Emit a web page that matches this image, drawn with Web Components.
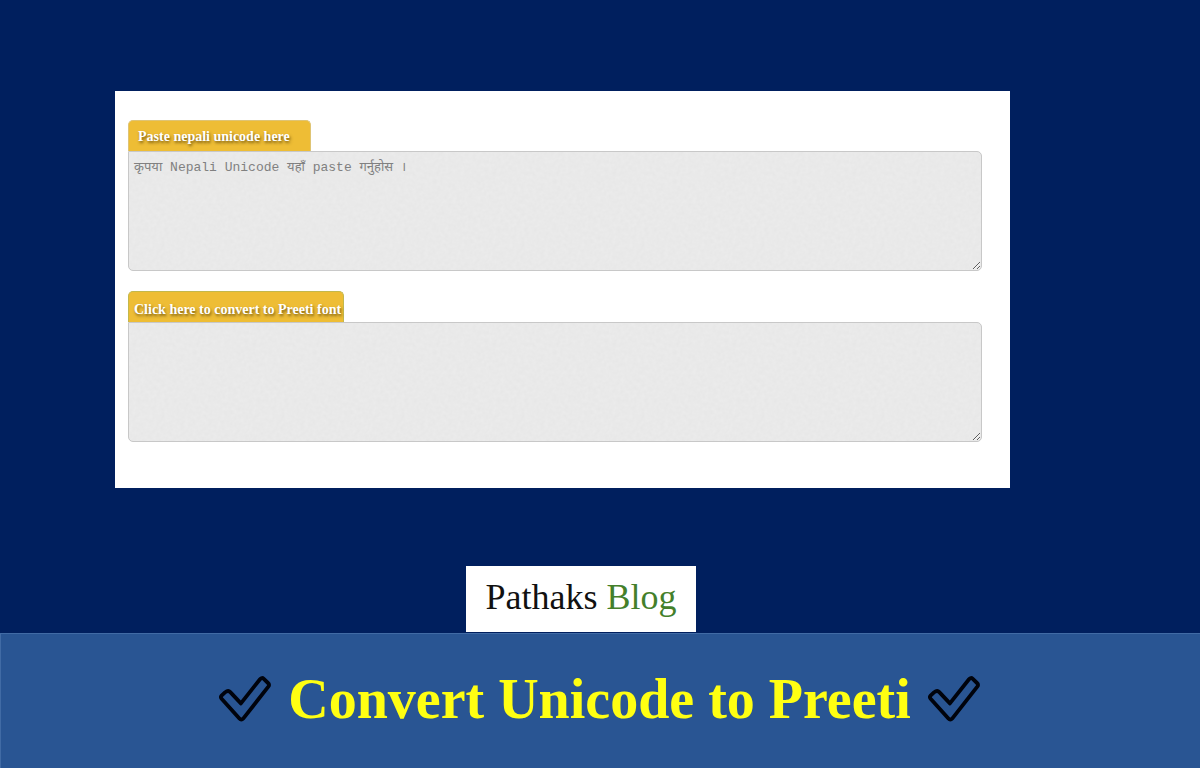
<!DOCTYPE html>
<html lang="en">
<head>
<meta charset="utf-8">
<meta name="viewport" content="width=device-width, initial-scale=1">
<title>Convert Unicode to Preeti</title>
<style>
  body { margin: 0; background: #001f5e; font-family: "Palatino Linotype", Palatino, "Liberation Serif", serif; }
</style>
</head>
<body>
<converter-page>
  <converter-panel>
    <converter-field caption="Paste nepali unicode here" hint="कृपया Nepali Unicode यहाँ paste गर्नुहोस ।"></converter-field>
    <converter-field caption="Click here to convert to Preeti font" action></converter-field>
  </converter-panel>
  <site-logo slot="logo"></site-logo>
  <title-banner slot="banner">Convert Unicode to Preeti</title-banner>
</converter-page>

<script>
class ConverterPage extends HTMLElement {
  constructor() {
    super();
    this.attachShadow({ mode: "open" }).innerHTML = `
      <style>
        :host { display: flex; flex-direction: column; min-height: 100vh; }
        main { padding: 91px 190px 78px 115px; }
        .logo { display: flex; justify-content: center; padding-right: 38px; margin-bottom: 1px; }
        footer { display: flex; flex: 1; }
        @media (max-width: 800px) { main { padding: 40px 20px; } }
      </style>
      <main><slot></slot></main>
      <div class="logo"><slot name="logo"></slot></div>
      <footer><slot name="banner"></slot></footer>`;
  }
}

class ConverterPanel extends HTMLElement {
  constructor() {
    super();
    this.attachShadow({ mode: "open" }).innerHTML = `
      <style>
        :host { display: flex; flex-direction: column; gap: 20px; background: #fff; padding: 29px 28px 46px 13px; }
      </style>
      <slot></slot>`;
  }
}

class ConverterField extends HTMLElement {
  connectedCallback() {
    if (this.shadowRoot) return;
    const caption = this.getAttribute("caption");
    const hint = this.getAttribute("hint") || "";
    const tab = this.hasAttribute("action")
      ? `<button class="tab" type="button">${caption}</button>`
      : `<label class="tab" for="text">${caption}</label>`;
    this.attachShadow({ mode: "open" }).innerHTML = `
      <style>
        :host { display: flex; flex-direction: column; align-items: flex-start; }
        .tab {
          box-sizing: border-box; height: 31px; margin: 0; padding: 2px 20px 0 9px;
          border: 1px solid #dfc474; border-bottom: 0; border-radius: 5px 5px 0 0;
          background: #eebd35; color: #fff;
          font: bold 14px/28px "Palatino Linotype", Palatino, "Liberation Serif", serif;
          text-shadow: 1px 2px 3px rgba(70, 50, 0, .7); white-space: nowrap;
        }
        button.tab { padding: 4px 2px 0 5px; border-color: #c3b84c; cursor: pointer; }
        textarea {
          box-sizing: border-box; display: block; width: 100%; height: 120px; margin: 0; padding: 6px 5px;
          border: 1px solid #c8c8c8; border-radius: 0 5px 5px 5px; resize: both; outline: 0;
          background: #e6e6e6 url("data:image/svg+xml,%3Csvg xmlns='http://www.w3.org/2000/svg' width='120' height='120'%3E%3Cfilter id='n'%3E%3CfeTurbulence type='fractalNoise' baseFrequency='.25' numOctaves='2' stitchTiles='stitch'/%3E%3CfeColorMatrix values='0 0 0 0 1 0 0 0 0 1 0 0 0 0 1 .5 0 0 0 0'/%3E%3C/filter%3E%3Crect width='120' height='120' filter='url(%23n)' opacity='.5'/%3E%3C/svg%3E");
          color: #444; font: 13px/19px "Liberation Mono", "Noto Sans Devanagari", "Noto Sans", monospace;
        }
        textarea::placeholder { color: #808080; opacity: 1; }
      </style>
      ${tab}
      <textarea id="text" aria-label="${caption}" placeholder="${hint}"></textarea>`;
  }
}

class SiteLogo extends HTMLElement {
  constructor() {
    super();
    this.attachShadow({ mode: "open" }).innerHTML = `
      <style>
        :host { display: block; }
        a { display: block; background: #fff; width: 230px; padding-bottom: 4px; color: #111; text-align: center;
            text-decoration: none; font: 36px/62px "Liberation Serif", serif; }
        span { color: #44802a; }
      </style>
      <a href="#">Pathaks <span>Blog</span></a>`;
  }
}

class CheckMark extends HTMLElement {
  constructor() {
    super();
    this.attachShadow({ mode: "open" }).innerHTML = `
      <style>
        :host { display: block; flex: none; width: 52px; height: 46px; }
        svg { display: block; }
      </style>
      <svg width="52" height="46" viewBox="0 0 52 46" fill="none" stroke="#00030c" stroke-width="3.8" stroke-linejoin="round" aria-hidden="true">
        <path d="M6 16.4 L2.8 19.4 Q1.2 21 2.6 22.7 L20.4 42.6 Q22.3 44.8 24.2 42.6 L49.3 10.7 Q50.8 8.7 49 7 L44.8 2.9 Q42.8 1 41 3.2 L21.9 27.4 L11.3 16.1 Q9.2 13.8 6 16.4 Z"/>
      </svg>`;
  }
}

class TitleBanner extends HTMLElement {
  constructor() {
    super();
    this.attachShadow({ mode: "open" }).innerHTML = `
      <style>
        :host {
          box-sizing: border-box; display: flex; flex: 1; align-items: center; justify-content: center; gap: 17px;
          min-height: 135px; padding: 0 2px 4px 0; background: #295593;
          border: 1px solid #416ba5; border-width: 1px 0 0 1px;
        }
        h1 { margin: 0; color: #ffff12; font: bold 56px/64px "Palatino Linotype", Palatino, "Liberation Serif", serif; }
      </style>
      <check-mark></check-mark>
      <h1><slot></slot></h1>
      <check-mark></check-mark>`;
  }
}

customElements.define("converter-page", ConverterPage);
customElements.define("converter-panel", ConverterPanel);
customElements.define("converter-field", ConverterField);
customElements.define("site-logo", SiteLogo);
customElements.define("check-mark", CheckMark);
customElements.define("title-banner", TitleBanner);
</script>
</body>
</html>
